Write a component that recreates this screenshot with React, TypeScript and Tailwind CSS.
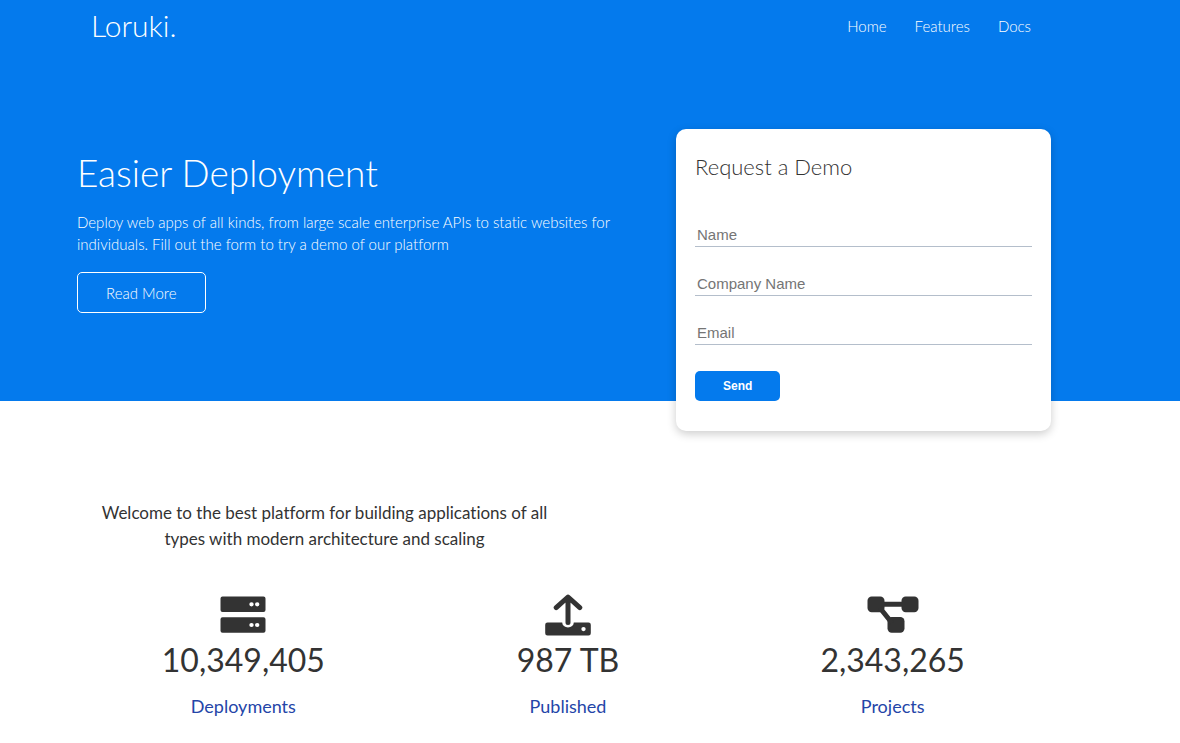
import type { ReactNode } from "react";

const links = ["Home", "Features", "Docs"];

const fields = [
  { id: "name", label: "Name", type: "text" },
  { id: "company", label: "Company Name", type: "text" },
  { id: "email", label: "Email", type: "email" },
];

function ServerIcon() {
  return (
    <svg width="46" height="42" viewBox="0 0 46 42" fill="currentColor" aria-hidden="true">
      <path fillRule="evenodd" d="M2.500 2.500H43.500a2 2 0 0 1 2 2V16a2 2 0 0 1-2 2H2.500a2 2 0 0 1-2-2V4.500a2 2 0 0 1 2-2zM31.500 8.200a2.200 2.100 0 1 0 0 4.200a2.200 2.100 0 1 0 0-4.200zM37.200 8.200a2.200 2.100 0 1 0 0 4.200a2.200 2.100 0 1 0 0-4.200z" />
      <path fillRule="evenodd" d="M2.500 23.200H43.500a2 2 0 0 1 2 2V36.700a2 2 0 0 1-2 2H2.500a2 2 0 0 1-2-2V25.200a2 2 0 0 1 2-2zM31.500 28.900a2.200 2.100 0 1 0 0 4.200a2.200 2.100 0 1 0 0-4.200zM37.200 28.900a2.200 2.100 0 1 0 0 4.200a2.200 2.100 0 1 0 0-4.200z" />
    </svg>
  );
}

function UploadIcon() {
  return (
    <svg width="46" height="42" viewBox="0 0 46 42" fill="none" aria-hidden="true">
      <path d="M11.200 13.600L23 3L34.800 13.600M23 4V28.500" stroke="currentColor" strokeWidth="5" strokeLinecap="round" strokeLinejoin="round" />
      <path fill="currentColor" fillRule="evenodd" d="M2.500 28.500H17.200a5.800 5 0 0 0 11.600 0H43.500a2.300 2.300 0 0 1 2.300 2.300V39.300a2.300 2.300 0 0 1-2.300 2.300H2.500a2.300 2.300 0 0 1-2.300-2.300V30.800a2.300 2.300 0 0 1 2.300-2.300zM38.500 33a2.200 2.100 0 1 0 0 4.200a2.200 2.100 0 1 0 0-4.200z" />
    </svg>
  );
}

function ProjectIcon() {
  return (
    <svg width="52" height="42" viewBox="0 0 52 42" fill="currentColor" aria-hidden="true">
      <rect x="0.500" y="2.500" width="17" height="15.700" rx="4.200" />
      <rect x="34.500" y="2.500" width="17" height="15.700" rx="4.200" />
      <rect x="20.500" y="23" width="17" height="15.700" rx="4.200" />
      <path d="M16 10.300H36M13 14L25 29" fill="none" stroke="currentColor" strokeWidth="5" />
    </svg>
  );
}

const stats: { icon: ReactNode; value: string; label: string }[] = [
  { icon: <ServerIcon />, value: "10,349,405", label: "Deployments" },
  { icon: <UploadIcon />, value: "987 TB", label: "Published" },
  { icon: <ProjectIcon />, value: "2,343,265", label: "Projects" },
];

export default function App() {
  return (
    <div className="min-h-screen bg-white font-['Lato',sans-serif] font-light text-[#333] [font-variant-ligatures:none]">
      <header className="bg-[#047aed] text-white">
        <div className="flex h-[52px] items-center justify-between pr-[135px] pl-[91px]">
          <h1 className="pb-[2px] text-[30px] leading-[40px]">Loruki.</h1>
          <nav>
            <ul className="flex">
              {links.map((link) => (
                <li key={link} className="px-[14px]">
                  <a href="#" className="text-[15px]">{link}</a>
                </li>
              ))}
            </ul>
          </nav>
        </div>
      </header>

      <section className="h-[349px] bg-[#047aed]">
        <div className="flex items-start justify-between pt-[77px] pr-[129px] pl-[77px]">
          <div className="w-[540px] pt-5 text-white">
            <h2 className="text-[37px] leading-[48px]">Easier Deployment</h2>
            <p className="mt-[14px] mb-[17px] text-[15px] leading-[22px]">
              Deploy web apps of all kinds, from large scale enterprise APIs to static websites for individuals. Fill out the form to try a demo of our platform
            </p>
            <a href="#" className="inline-block rounded-[5px] border border-white px-7 pt-[9px] pb-[7px] text-[15px] leading-[23px]">Read More</a>
          </div>

          <div className="w-[375px] rounded-[10px] bg-white px-[19px] pt-[23px] pb-[30px] shadow-[0_3px_10px_rgba(0,0,0,0.2)]">
            <h2 className="mb-[41px] text-[22px] leading-[30px]">Request a Demo</h2>
            <form>
              <div className="mb-[26px] flex flex-col gap-[25px]">
                {fields.map((field) => (
                  <input
                    key={field.id}
                    id={field.id}
                    name={field.id}
                    aria-label={field.label}
                    type={field.type}
                    placeholder={field.label}
                    className="h-6 w-full border-b border-[#b4becb] px-[2px] font-['Liberation_Sans',sans-serif] text-[15px] font-normal outline-none placeholder:text-[#757575]"
                  />
                ))}
              </div>
              <button type="button" className="block h-[30px] rounded-[5px] bg-[#047aed] px-7 font-['Liberation_Sans',sans-serif] text-[12px] font-bold text-white">Send</button>
            </form>
          </div>
        </div>
      </section>

      <section className="pt-[99px] pr-[125px] pl-[81px] font-normal">
        <h3 className="mb-[42px] w-1/2 px-5 text-center text-[17px] leading-[26px]">
          Welcome to the best platform for building applications of all types with modern architecture and scaling
        </h3>
        <div className="grid grid-cols-3">
          {stats.map((stat) => (
            <div key={stat.label} className="flex flex-col items-center">
              {stat.icon}
              <p className="mt-px text-[32px] leading-[46px]">{stat.value}</p>
              <p className="mt-[9px] text-[18px] leading-[28px] text-[#2445a8]">{stat.label}</p>
            </div>
          ))}
        </div>
      </section>
    </div>
  );
}
